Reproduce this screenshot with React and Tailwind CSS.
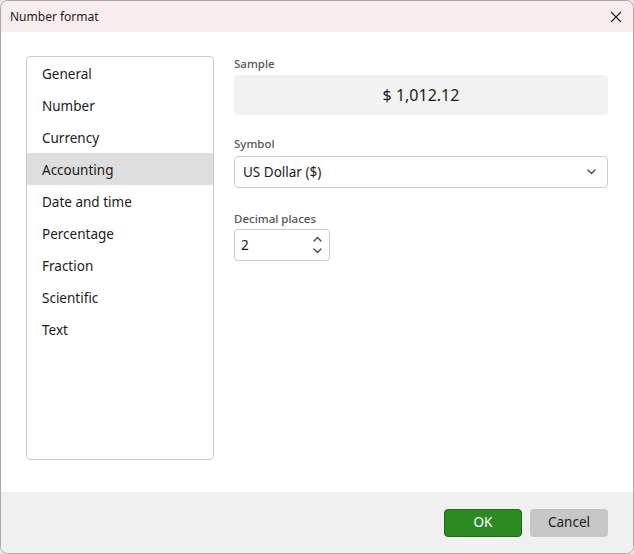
import React, { useState } from 'react';

const formats = ['General', 'Number', 'Currency', 'Accounting', 'Date and time', 'Percentage', 'Fraction', 'Scientific', 'Text'];

const Chevron = ({ up }) => (
    <svg width="9" height="6" viewBox="0 0 9 6" fill="none">
        <path d={up ? 'M1 5L4.5 1.5L8 5' : 'M1 1L4.5 4.5L8 1'} stroke="#555" strokeWidth="1.5" strokeLinecap="round" strokeLinejoin="round" />
    </svg>
);

const App = () => {
    const [selected, setSelected] = useState('Accounting');

    return (
        <div className="w-[634px] h-[554px] bg-[#e5e5e5] font-['Noto_Sans',sans-serif] text-[#1b1b1b]">
            <div className="w-full h-full flex flex-col border border-[#a8a8a8] rounded-lg overflow-hidden bg-white">
                {/* title bar */}
                <div className="h-[31px] flex items-center justify-between bg-[#f8eef0] pl-[9px] pr-[11px]">
                    <span className="text-[12px]">Number format</span>
                    <svg width="12" height="12" viewBox="0 0 12 12">
                        <path d="M1 1L11 11M11 1L1 11" stroke="#222" strokeWidth="1.1" />
                    </svg>
                </div>

                <div className="flex-1 flex gap-[20px] pl-[25px] pr-[25px] pt-[23px] pb-[32px]">
                    <div className="mt-[1px] w-[188px] border border-[#cccccc] rounded-[4px]">
                        {formats.map((f) => (
                            <div
                                key={f}
                                onClick={() => setSelected(f)}
                                className={`h-[32px] flex items-center pl-[15px] pt-[2px] text-[13.5px] ${selected === f ? 'bg-[#dedede]' : ''}`}
                            >
                                {f}
                            </div>
                        ))}
                    </div>

                    <div className="flex-1 flex flex-col">
                        <div className="text-[11.5px] font-medium text-[#555] h-[18px] flex items-center">Sample</div>
                        <div className="mt-[2px] h-[40px] rounded-[4px] bg-[#f2f2f2] flex items-center justify-center text-[16px]">
                            $ 1,012.12
                        </div>

                        <div className="mt-[20px] text-[11.5px] font-medium text-[#555] h-[18px] flex items-center">Symbol</div>
                        <div className="mt-[3px] h-[32px] border border-[#cccccc] rounded-[4px] flex items-center justify-between pl-[8px] pr-[11px]">
                            <span className="text-[13.5px]">US Dollar ($)</span>
                            <Chevron />
                        </div>

                        <div className="mt-[22px] text-[11.5px] font-medium text-[#555] h-[18px] flex items-center">Decimal places</div>
                        <div className="mt-[1px] w-[96px] h-[32px] border border-[#cccccc] rounded-[4px] flex items-center justify-between pl-[6px] pr-[7px]">
                            <span className="text-[13.5px]">2</span>
                            <div className="flex flex-col gap-[6px]">
                                <Chevron up />
                                <Chevron />
                            </div>
                        </div>
                    </div>
                </div>

                {/* footer */}
                <div className="h-[61px] bg-[#f0f0f0] flex items-center justify-end gap-[8px] pr-[25px]">
                    <button className="w-[78px] h-[28px] rounded-[4px] bg-[#2b8a22] border border-[#1c6a16] text-white text-[13.5px]">
                        OK
                    </button>
                    <button className="w-[78px] h-[28px] rounded-[4px] bg-[#c6c6c6] text-[#1b1b1b] text-[13.5px]">
                        Cancel
                    </button>
                </div>
            </div>
        </div>
    );
};

export default App;
